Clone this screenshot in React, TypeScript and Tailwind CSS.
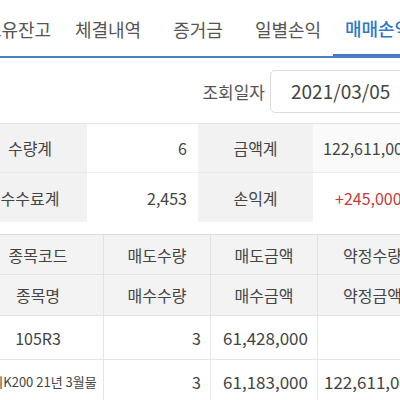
const font = { fontFamily: '"Noto Sans CJK KR", "Noto Sans", sans-serif' };

const tabs = ["보유잔고", "체결내역", "증거금", "일별손익", "매매손익"];

export default function App() {
  return (
    <div className="w-[400px] h-[400px] overflow-hidden bg-white text-[#444]" style={font}>
      <div className="w-[454px] -ml-[27px]">
        {/* Tabs */}
        <div className="flex h-[58px] border-b-2 border-[#4a7fc3]">
          {tabs.map((t, i) => (
            <div
              key={t}
              className={
                i === 4
                  ? "w-[90px] shrink-0 flex items-center justify-center pt-[3px] text-[18px] font-medium text-[#2f77c9] border-b-2 border-[#3b7bc8]"
                  : "w-[90px] shrink-0 flex items-center justify-center pt-[3px] text-[18px] text-[#555]"
              }
            >
              {t}
            </div>
          ))}
        </div>

        {/* Date */}
        <div className="flex items-center justify-end pt-[12px] pb-[10px] pr-[7px]">
          <span className="text-[17px] mr-[5px] text-[#555]">조회일자</span>
          <div className="w-[150px] h-[43px] flex items-center pl-[20px] border border-[#dcdcdc] rounded-[5px] text-[19px] text-[#444]">
            2021/03/05
          </div>
        </div>

        {/* Summary */}
        <div className="grid grid-cols-[114px_111px_115px_114px] border-t border-[#e6e6e6] text-[16px]">
          <div className="h-[49px] flex items-center justify-center bg-[#f2f2f2] border-b border-[#e9e9e9]">수량계</div>
          <div className="h-[49px] flex items-center justify-end pr-[11px] border-b border-[#eeeeee]">6</div>
          <div className="h-[49px] flex items-center justify-center bg-[#f2f2f2] border-b border-[#e9e9e9]">금액계</div>
          <div className="h-[49px] flex items-center pl-[10px] border-b border-[#eeeeee] bg-[#fafafa]">122,611,000</div>
          <div className="h-[49px] flex items-center justify-center bg-[#f2f2f2]">수수료계</div>
          <div className="h-[49px] flex items-center justify-end pr-[11px]">2,453</div>
          <div className="h-[49px] flex items-center justify-center bg-[#f2f2f2]">손익계</div>
          <div className="h-[49px] flex items-center pl-[22px] text-[#c53a3a]">+245,000</div>
        </div>

        {/* Detail table */}
        <div className="mt-[12px] grid grid-cols-[130px_107px_107px_110px] border-t border-[#dedede] text-[16px]">
          {["종목코드", "매도수량", "매도금액", "약정수량"].map((h, i) => (
            <div
              key={h}
              className={`h-[40px] flex items-center justify-center bg-[#f3f3f3] border-b border-[#e2e2e2] ${i > 0 ? "border-l" : ""}`}
            >
              {h}
            </div>
          ))}
          {["종목명", "매수수량", "매수금액", "약정금액"].map((h, i) => (
            <div
              key={h}
              className={`h-[41px] flex items-center justify-center bg-[#f3f3f3] border-b border-[#e2e2e2] ${i > 0 ? "border-l" : ""}`}
            >
              {h}
            </div>
          ))}

          <div className="h-[44px] flex items-center justify-center border-b border-[#e6e6e6]">105R3</div>
          <div className="h-[44px] flex items-center justify-end pr-[9px] border-b border-l border-[#e6e6e6]">3</div>
          <div className="h-[44px] flex items-center justify-end pr-[9px] border-b border-l border-[#e6e6e6] text-[17px]">61,428,000</div>
          <div className="h-[44px] border-b border-l border-[#e6e6e6]" />

          <div className="h-[44px] flex items-center justify-center text-[13px] whitespace-nowrap">미니K200 21년 3월물</div>
          <div className="h-[44px] flex items-center justify-end pr-[9px] border-l border-[#e6e6e6]">3</div>
          <div className="h-[44px] flex items-center justify-end pr-[9px] border-l border-[#e6e6e6] text-[17px]">61,183,000</div>
          <div className="h-[44px] flex items-center pl-[6px] border-l border-[#e6e6e6] text-[17px]">122,611,000</div>
        </div>
      </div>
    </div>
  );
}
